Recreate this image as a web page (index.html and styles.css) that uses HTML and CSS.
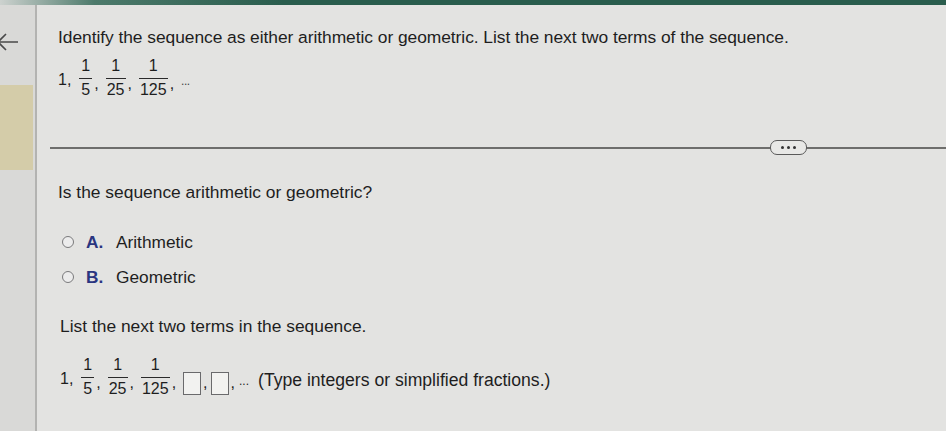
FILE: index.html
```html
<!DOCTYPE html>
<html>
<head>
<meta charset="utf-8">
<link rel="stylesheet" href="styles.css">
</head>
<body>
<div class="topbar"></div>
<div class="page">
  <aside class="sidebar">
    <div class="back">
      <svg width="24" height="20" viewBox="0 0 24 20"><path d="M22 10 H2 M10 2 L2 10 L10 18" fill="none" stroke="#4a4a4a" stroke-width="1.6"/></svg>
    </div>
    <div class="tan"></div>
  </aside>
  <main class="main">
    <section class="question">
      <p class="title">Identify the sequence as either arithmetic or geometric. List the next two terms of the sequence.</p>
      <div class="seq">
        <span class="num">1,</span>
        <span class="frac"><span class="n">1</span><span class="d">5</span></span><span class="comma">,</span>
        <span class="frac"><span class="n">1</span><span class="d">25</span></span><span class="comma">,</span>
        <span class="frac"><span class="n">1</span><span class="d">125</span></span><span class="comma">,</span>
        <span class="dots">...</span>
      </div>
    </section>
    <div class="divider"><span class="pill"><i></i><i></i><i></i></span></div>
    <section class="answer">
      <p class="prompt">Is the sequence arithmetic or geometric?</p>
      <div class="options">
        <label class="opt"><span class="radio"></span><span class="letter">A.</span><span>Arithmetic</span></label>
        <label class="opt"><span class="radio"></span><span class="letter">B.</span><span>Geometric</span></label>
      </div>
      <p class="prompt list">List the next two terms in the sequence.</p>
      <div class="seq seq2">
        <span class="num">1,</span>
        <span class="frac"><span class="n">1</span><span class="d">5</span></span><span class="comma">,</span>
        <span class="frac"><span class="n">1</span><span class="d">25</span></span><span class="comma">,</span>
        <span class="frac"><span class="n">1</span><span class="d">125</span></span><span class="comma">,</span>
        <span class="box"></span><span class="comma c2">,</span>
        <span class="box"></span><span class="comma c2">,</span>
        <span class="ell">...</span>
        <span class="hint">(Type integers or simplified fractions.)</span>
      </div>
    </section>
  </main>
</div>
</body>
</html>
```
FILE: styles.css
```css
html, body {
  margin: 0;
  padding: 0;
}
body {
  width: 946px;
  height: 431px;
  overflow: hidden;
  background: #e3e3e1;
  font-family: "Liberation Sans", Arial, sans-serif;
  color: #1e1e1e;
}
.topbar {
  height: 5px;
  background: linear-gradient(90deg, #cdd2cf 0, #4d7a6b 10%, #2a5d4d 30%, #2a5d4d 100%);
}
.page {
  display: flex;
  height: 426px;
}
.sidebar {
  width: 35px;
  flex: none;
  background: #d9d9d7;
  border-right: 2px solid #b3b3b1;
  display: flex;
  flex-direction: column;
}
.back {
  height: 20px;
  margin-top: 27px;
  margin-left: -4px;
}
.back svg { display: block; }
.tan {
  margin-top: 33px;
  height: 85px;
  width: 33px;
  background: #d4cca9;
}
.main {
  flex: 1;
  display: flex;
  flex-direction: column;
}
.question {
  padding-left: 21px;
}
.title {
  margin: 22px 0 0;
  font-size: 17.4px;
  line-height: 20px;
  letter-spacing: -0.05px;
}
.seq {
  display: flex;
  align-items: center;
  font-size: 16px;
  margin-top: 10px;
}
.num { margin-right: 8px; margin-top: 4px; }
.frac {
  display: inline-flex;
  flex-direction: column;
  align-items: center;
}
.frac .n {
  line-height: 18px;
  padding: 0 2px 3px;
  border-bottom: 1px solid #2a2a2a;
  align-self: stretch;
  text-align: center;
}
.frac .d {
  line-height: 18px;
  padding: 2px 1px 0;
}
.comma {
  margin: 12px 7px 0 2px;
  line-height: 18px;
}
.dots {
  font-size: 12px;
  letter-spacing: -0.5px;
  margin-top: 6px;
  color: #444;
}
.divider {
  margin-top: 48px;
  margin-left: 13px;
  height: 2px;
  background: #6e6e6c;
  position: relative;
}
.pill {
  position: absolute;
  left: 720px;
  top: -7px;
  width: 35px;
  height: 13px;
  border: 1.5px solid #5a5a5a;
  border-radius: 7px;
  background: #e8e8e6;
  display: flex;
  align-items: center;
  justify-content: center;
  gap: 3px;
}
.pill i {
  width: 3px;
  height: 3px;
  border-radius: 50%;
  background: #333;
}
.answer {
  padding-left: 21px;
}
.prompt {
  margin: 33px 0 0;
  font-size: 17.4px;
  line-height: 20px;
}
.options {
  display: flex;
  flex-direction: column;
  gap: 15px;
  margin-top: 30px;
  margin-left: 4px;
}
.opt {
  display: flex;
  align-items: center;
  font-size: 17.3px;
  line-height: 20px;
}
.radio {
  width: 10px;
  height: 10px;
  border: 1.8px solid #7a7a7c;
  border-radius: 50%;
  background: #ececec;
  margin-right: 12px;
}
.letter {
  color: #2a3580;
  font-weight: bold;
  width: 30px;
}
.prompt.list {
  margin-top: 29px;
  margin-left: 2px;
}
.seq2 {
  margin-top: 20px;
  margin-left: 2px;
}
.box {
  width: 16px;
  height: 21px;
  border: 1.5px solid #6a6a6c;
  background: #f2f2f0;
  margin-top: 12px;
}
.c2 { margin: 12px 3px 0 2px; }
.ell {
  font-size: 12px;
  margin: 8px 9px 0 1px;
}
.hint {
  font-size: 17.6px;
  margin-top: 6px;
}
```
